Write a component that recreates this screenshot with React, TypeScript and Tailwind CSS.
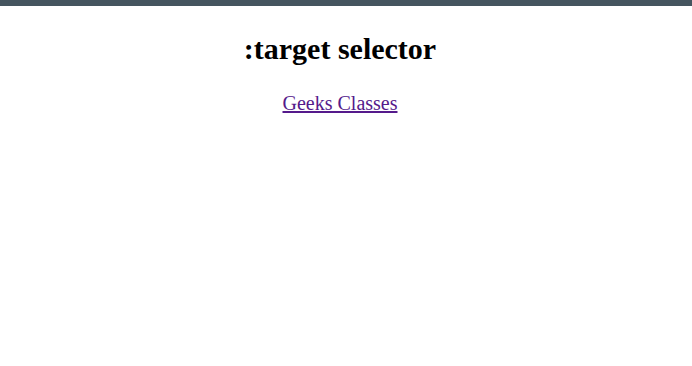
import React from "react";

export default function App() {
  return (
    <div className="min-h-screen bg-white font-['Liberation_Serif',serif] text-black">
      <div className="h-[6px] w-full bg-[#45555f]" />
      <div className="flex flex-col items-center pr-[12px]">
        <h1 className="mt-[25px] text-[30px] font-bold leading-[35px]">:target selector</h1>
        <a href="#geeks" className="mt-[26px] text-[20px] leading-[23px] text-[#551a8b] underline">
          Geeks Classes
        </a>
      </div>
    </div>
  );
}
